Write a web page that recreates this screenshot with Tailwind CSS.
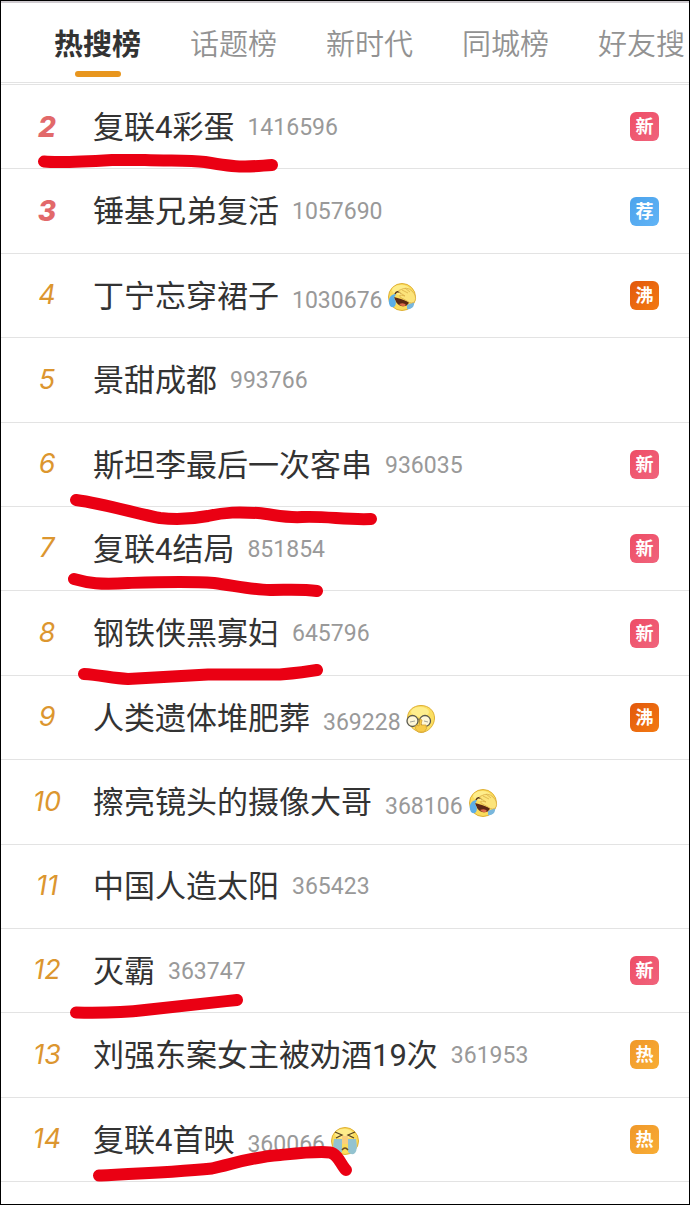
<!DOCTYPE html>
<html lang="zh-CN">
<head>
  <meta charset="UTF-8">
  <meta name="viewport" content="width=device-width, initial-scale=1.0">
  <title>热搜榜</title>
  <script src="https://cdn.jsdelivr.net/npm/@tailwindcss/browser@4"></script>
</head>
<body class="bg-white font-[Roboto,'Noto_Sans_CJK_SC',sans-serif] text-[#333]">
  <div class="relative flex min-h-screen flex-col overflow-hidden border border-black pb-[22px]">
    <!-- 顶部标签 -->
    <nav class="flex h-[82px] shrink-0 gap-[49px] border-t-2 border-b border-t-[#cfcbd0] border-b-[#e3e3e3] pl-[53px] text-[29px] whitespace-nowrap text-[#929292]">
      <button class="flex flex-col items-center pt-[20px] font-bold text-[#333]">
        <span class="leading-[44px]">热搜榜</span>
        <span class="mt-[4px] h-[6px] w-[46px] rounded-full bg-[#e8961e]"></span>
      </button>
      <button class="pt-[7px] font-[350]">话题榜</button>
      <button class="pt-[7px] font-[350]">新时代</button>
      <button class="pt-[7px] font-[350]">同城榜</button>
      <button class="pt-[7px] font-[350]">好友搜</button>
    </nav>

    <!-- 榜单 -->
    <ol id="list" class="mt-px flex grow flex-col border-t border-[#e3e3e3]"></ol>

    <!-- 手绘红线 -->
    <svg class="pointer-events-none absolute -top-px -left-px h-[1205px] w-[690px]" viewBox="0 0 690 1205" fill="none" stroke="#ea0013" stroke-width="12" stroke-linecap="round" stroke-linejoin="round" aria-hidden="true">
      <path d="M44 161.500C60 163 78 162 112 160H145C170 161 188 160 205 162C222 165 236 167 245 166.500C256 166.500 263 165.500 272 165"/>
      <path d="M76 500C105 504 138 514 160 518C178 520 192 519 208 516C226 512 238 512 258 513C276 515 286 518 302 517C328 516 344 520 371 519"/>
      <path d="M74 579C88 583 100 585 128 583C160 582 188 581 214 583C236 586 254 590 270 590C288 590 302 589 317 591"/>
      <path d="M84 674C100 675 112 678 128 679C150 678 178 676 208 674.500H280C296 673 306 672 317 670"/>
      <path d="M76 1012.500C100 1013 120 1013 145 1010C180 1006 208 1003 237 1000"/>
      <path d="M99 1175.500C130 1174 178 1172 212 1168.500C236 1163 252 1157 280 1155C300 1153 318 1151 330 1152.500C338 1154 341 1165 346 1170"/>
    </svg>
  </div>

  <script>
    const items = [
      { rank: 2, title: '复联4彩蛋', count: 1416596, tag: '新' },
      { rank: 3, title: '锤基兄弟复活', count: 1057690, tag: '荐' },
      { rank: 4, title: '丁宁忘穿裙子', count: 1030676, tag: '沸', emoji: 'laugh' },
      { rank: 5, title: '景甜成都', count: 993766 },
      { rank: 6, title: '斯坦李最后一次客串', count: 936035, tag: '新' },
      { rank: 7, title: '复联4结局', count: 851854, tag: '新' },
      { rank: 8, title: '钢铁侠黑寡妇', count: 645796, tag: '新' },
      { rank: 9, title: '人类遗体堆肥葬', count: 369228, tag: '沸', emoji: 'glasses' },
      { rank: 10, title: '擦亮镜头的摄像大哥', count: 368106, emoji: 'laugh' },
      { rank: 11, title: '中国人造太阳', count: 365423 },
      { rank: 12, title: '灭霸', count: 363747, tag: '新' },
      { rank: 13, title: '刘强东案女主被劝酒19次', count: 361953, tag: '热' },
      { rank: 14, title: '复联4首映', count: 360066, tag: '热', emoji: 'cry' },
    ];

    const tagColors = {
      '新': 'bg-linear-to-br from-[#ee4c66] to-[#f0647c]',
      '荐': 'bg-linear-to-br from-[#4ba3ec] to-[#62b4f6]',
      '沸': 'bg-linear-to-br from-[#e2580c] to-[#f37a12]',
      '热': 'bg-linear-to-br from-[#f0982a] to-[#f8ad35]',
    };

    const face = '<circle cx="15" cy="15" r="13.500" fill="#fbdc5c" stroke="#dfb035" stroke-width="1"/><ellipse cx="14" cy="8" rx="9" ry="5" fill="#fff3a0" opacity=".7"/>';

    const emojis = {
      // 笑哭捂脸
      laugh: face +
        '<path d="M7 15L14 17L22 20C21 26 10 27 7 15Z" fill="#5b2814"/>' +
        '<path d="M12 22Q17 20 19 23Q16 26 12 22Z" fill="#e06a4a"/>' +
        '<path d="M8 12Q10 8 14 11" stroke="#57351c" stroke-width="1.500" fill="none"/>' +
        '<path d="M9 12C3 12 0 18 3 24C8 28 11 21 7 16Z" fill="#5caee6"/>' +
        '<path d="M20 23L27 20C28 25 23 28 20 27Z" fill="#79b7dc"/>' +
        '<path d="M13 8Q20 4 25 9Q30 14 28 19Q25 23 20 19L13 15Q12 13 14 13L18 14L12 10Q11 8 13 8Z" fill="#fce47a" stroke="#dbb04a" stroke-width=".8"/>' +
        '<path d="M15 8L21 11M18 6L23 10" stroke="#dbb04a" stroke-width=".8"/>',
      // 推眼镜
      glasses: '<path d="M15 1.500C23 1.500 28.500 7 28.500 14C28.500 21 23 28 15 28.500C8 27 1.500 21 1.500 14C1.500 7 7 1.500 15 1.500Z" fill="#fbdf62" stroke="#dfb035"/><ellipse cx="14" cy="8" rx="9" ry="5" fill="#fff3a0" opacity=".7"/>' +
        '<g fill="#fff" fill-opacity=".75" stroke="#5a594c" stroke-width="1.300"><circle cx="6.500" cy="17" r="5.500"/><circle cx="19" cy="17" r="5.500"/></g>' +
        '<path d="M12 15.500Q13 14.500 13.500 15.500" stroke="#5a594c" fill="none"/>' +
        '<path d="M4 18L9 17M18 17L22 18" stroke="#a5a59a"/>' +
        '<path d="M14 15L16 16L15 21L20 21Q22 25 18 28H12Q8 25 10 21L13 22Z" fill="#f8cb48" stroke="#d3a234" stroke-width=".8"/>',
      // 大哭
      cry: face +
        '<path d="M4 13H12V26Q8 30 5 27Q2 24 4 13Z" fill="#93c3d0"/>' +
        '<path d="M18 13H26Q28 24 25 27Q22 30 18 26Z" fill="#93c3d0"/>' +
        '<path d="M12 10H18V18H12Z" fill="#fbcf7c"/>' +
        '<path d="M5 6L12 9L6 12M25 6L18 9L24 12" stroke="#5a4320" stroke-width="1.300" fill="none"/>' +
        '<path d="M12 24Q15 20 18 24" stroke="#6b4a20" stroke-width="1.500" fill="none"/>',
    };

    document.getElementById('list').innerHTML = items.map(item => `
      <li class="flex min-h-[80px] flex-1 items-center border-b border-[#e3e3e3] pr-[30px]">
        <span class="w-[92px] shrink-0 text-center font-[Inter,sans-serif] italic ${item.rank <= 3 ? 'text-[28px] font-extrabold text-[#e2696a]' : 'text-[27px] text-[#dc962f]'}">${item.rank}</span>
        <a href="#" class="flex grow items-center pt-[3px] whitespace-nowrap">
          <span class="text-[31px]">${item.title}</span>
          <span class="ml-[13px] text-[23px] text-[#999] ${item.emoji ? 'pt-[8px]' : ''}">${item.count}</span>
          ${item.emoji ? `<svg class="ml-[5px] size-[30px]" viewBox="0 0 30 30" aria-hidden="true">${emojis[item.emoji]}</svg>` : ''}
        </a>
        ${item.tag ? `<span class="flex size-[29px] items-center justify-center rounded-[6px] text-[18px] font-bold text-white ${tagColors[item.tag]}">${item.tag}</span>` : ''}
      </li>`).join('');
  </script>
</body>
</html>
